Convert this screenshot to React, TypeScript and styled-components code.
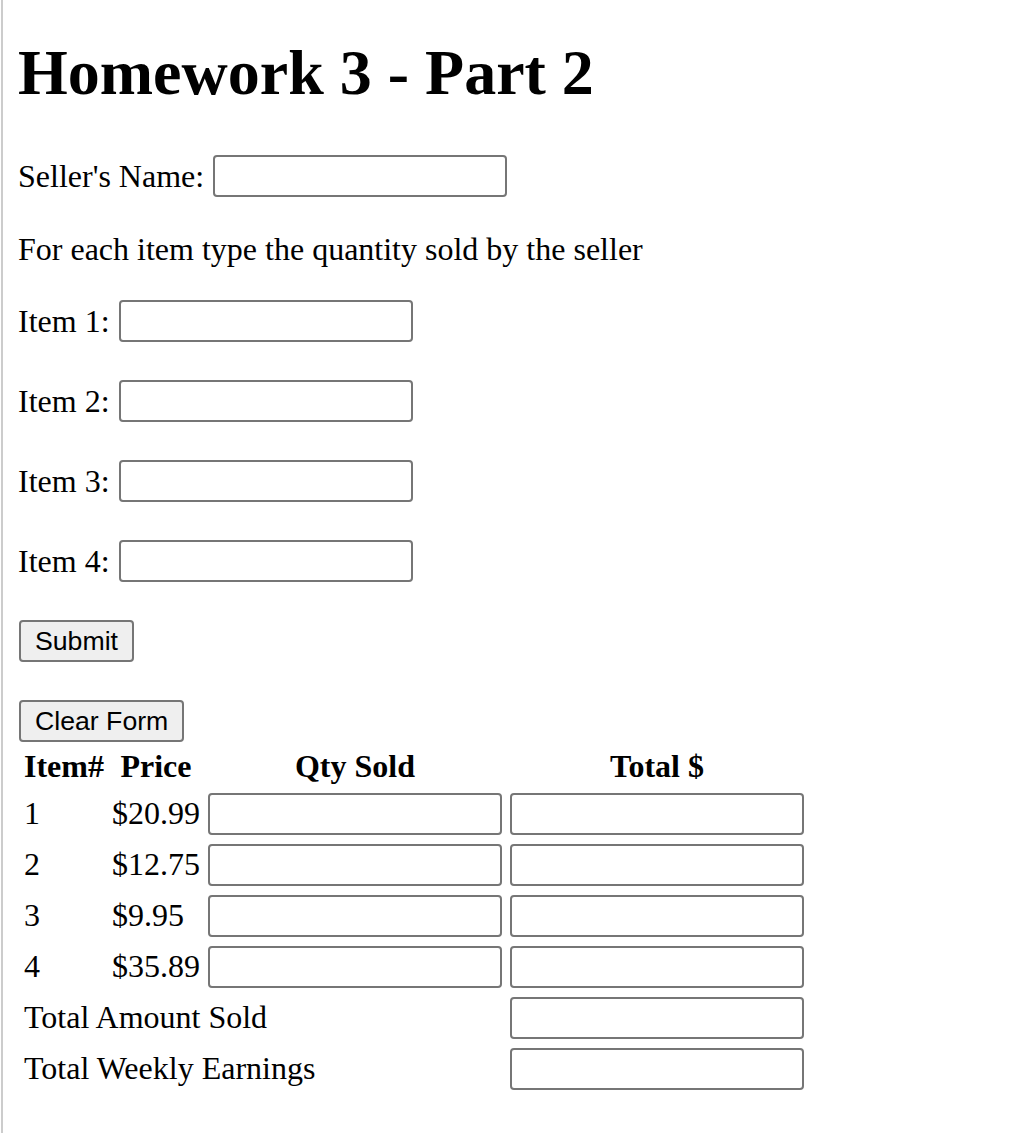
import React from "react";
import styled, { createGlobalStyle } from "styled-components";

const GlobalStyle = createGlobalStyle`
  html, body {
    margin: 0;
    padding: 0;
    background: #ffffff;
  }
  body {
    font-family: "Liberation Serif", "Times New Roman", serif;
    font-size: 32px;
    color: #000000;
  }
`;

const Page = styled.div`
  min-height: 100vh;
  box-sizing: border-box;
  margin-left: 1px;
  border-left: 2px solid #cccccc;
  padding: 41px 0 40px 15px;
`;

const Title = styled.h1`
  margin: 0;
  font-size: 64px;
  line-height: 64px;
  font-weight: bold;
`;

const FieldRow = styled.div<{ $top?: number }>`
  display: flex;
  align-items: center;
  gap: 9px;
  height: 42px;
  margin-top: ${(p) => p.$top ?? 0}px;
  white-space: nowrap;
`;

const Label = styled.label`
  line-height: 42px;
`;

const Instructions = styled.p`
  margin: 34px 0 0;
  line-height: 37px;
`;

const FieldList = styled.div`
  display: flex;
  flex-direction: column;
  align-items: flex-start;
  gap: 38px;
  margin-top: 32px;
`;

const TextInput = styled.input.attrs({ type: "text" })`
  box-sizing: border-box;
  width: 294px;
  height: 42px;
  margin: 0;
  padding: 2px 6px;
  border: 2px solid #767676;
  border-radius: 4px;
  background: #ffffff;
  font-family: "Liberation Sans", Arial, sans-serif;
  font-size: 26px;
  display: block;
`;

const Button = styled.button`
  box-sizing: border-box;
  height: 42px;
  margin: 0 0 0 1px;
  padding: 0 14px;
  border: 2px solid #767676;
  border-radius: 4px;
  background: #efefef;
  color: #000000;
  font-family: "Liberation Sans", Arial, sans-serif;
  font-size: 26.67px;
  line-height: 38px;
`;

const SalesTable = styled.table`
  margin-top: 1px;
  border-collapse: separate;
  border-spacing: 4px;
  font-size: 32px;
`;

const HeadCell = styled.th`
  padding: 2px;
  font-weight: bold;
  text-align: center;
  line-height: 35px;
  white-space: nowrap;
`;

const Cell = styled.td`
  padding: 2px;
  height: 43px;
  line-height: 37px;
  vertical-align: middle;
  text-align: left;
  white-space: nowrap;
`;

const items = [
  { id: 1, price: "$20.99" },
  { id: 2, price: "$12.75" },
  { id: 3, price: "$9.95" },
  { id: 4, price: "$35.89" },
];

export default function App() {
  return (
    <>
      <GlobalStyle />
      <Page>
        <Title>Homework 3 - Part 2</Title>
        <FieldRow $top={50}>
          <Label htmlFor="seller">Seller's Name:</Label>
          <TextInput id="seller" />
        </FieldRow>
        <Instructions>For each item type the quantity sold by the seller</Instructions>
        <FieldList>
          {items.map((it) => (
            <FieldRow key={it.id}>
              <Label htmlFor={`item${it.id}`}>Item {it.id}:</Label>
              <TextInput id={`item${it.id}`} />
            </FieldRow>
          ))}
          <Button type="button">Submit</Button>
          <Button type="button">Clear Form</Button>
        </FieldList>
        <SalesTable>
          <thead>
            <tr>
              <HeadCell>Item#</HeadCell>
              <HeadCell>Price</HeadCell>
              <HeadCell>Qty Sold</HeadCell>
              <HeadCell>Total $</HeadCell>
            </tr>
          </thead>
          <tbody>
            {items.map((it) => (
              <tr key={it.id}>
                <Cell>{it.id}</Cell>
                <Cell>{it.price}</Cell>
                <Cell>
                  <TextInput />
                </Cell>
                <Cell>
                  <TextInput />
                </Cell>
              </tr>
            ))}
            <tr>
              <Cell colSpan={3}>Total Amount Sold</Cell>
              <Cell>
                <TextInput />
              </Cell>
            </tr>
            <tr>
              <Cell colSpan={3}>Total Weekly Earnings</Cell>
              <Cell>
                <TextInput />
              </Cell>
            </tr>
          </tbody>
        </SalesTable>
      </Page>
    </>
  );
}
